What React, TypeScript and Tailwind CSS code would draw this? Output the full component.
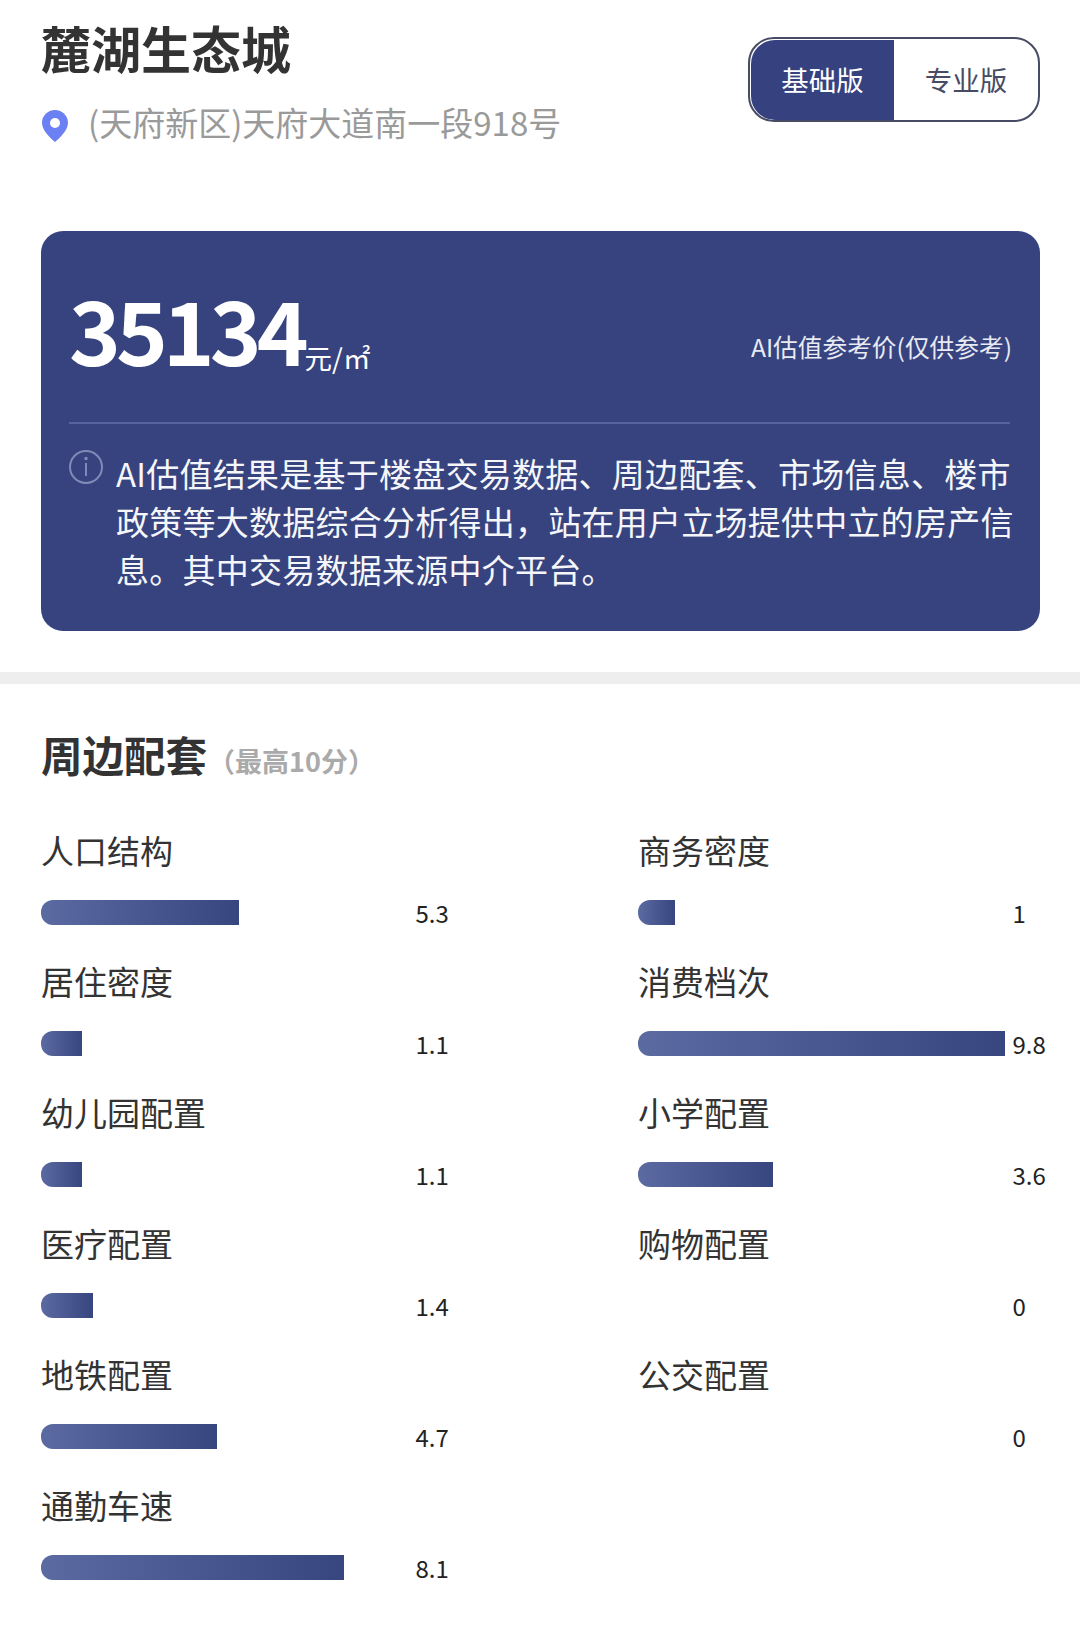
const FONT = "[font-family:'Noto_Sans_CJK_SC','Noto_Sans',sans-serif]";

const ROWS: { left: { label: string; value: number }; right?: { label: string; value: number } }[] = [
  { left: { label: "人口结构", value: 5.3 }, right: { label: "商务密度", value: 1 } },
  { left: { label: "居住密度", value: 1.1 }, right: { label: "消费档次", value: 9.8 } },
  { left: { label: "幼儿园配置", value: 1.1 }, right: { label: "小学配置", value: 3.6 } },
  { left: { label: "医疗配置", value: 1.4 }, right: { label: "购物配置", value: 0 } },
  { left: { label: "地铁配置", value: 4.7 }, right: { label: "公交配置", value: 0 } },
  { left: { label: "通勤车速", value: 8.1 } },
];

const BAR_UNIT = 37.4;

const Metric = ({ label, value }: { label: string; value: number }) => (
  <div className="h-[131px]">
    <div className="flex h-[40px] items-center text-[33px] leading-none text-[#333333]">{label}</div>
    <div className="mt-[29px] flex h-[27px] items-center">
      <div className="h-[25px] w-[374.500px]">
        {value > 0 && (
          <div
            className="h-full rounded-l-[12px] bg-gradient-to-r from-[#5b6aa1] to-[#38467f]"
            style={{ width: value * BAR_UNIT }}
          />
        )}
      </div>
      <span className="text-[24px] leading-none text-[#222222]">{value}</span>
    </div>
  </div>
);

export default function App() {
  return (
    <div className={`h-[1632px] w-[1080px] overflow-hidden bg-white ${FONT}`}>
      {/* Header */}
      <div className="flex h-[231px] justify-between pl-[41px] pr-[40px]">
        <div>
          <h1 className="mt-[17px] text-[50px] font-bold leading-[60px] text-[#333333]">麓湖生态城</h1>
          <div className="mt-[22px] flex items-center">
            <svg width="28" height="34" viewBox="0 0 28 34" className="mr-[19px] mt-[8px]">
              <path d="M14 1C6.800 1 1 6.700 1 13.800 1 22 10 29.500 14 33c4-3.500 13-11 13-19.200C27 6.700 21.200 1 14 1z" fill="#6b80f3" />
              <circle cx="14" cy="14" r="5" fill="#ffffff" />
            </svg>
            <span className="text-[33px] leading-[46px] text-[#9a9a9a]">(天府新区)天府大道南一段918号</span>
          </div>
        </div>
        <div className="mt-[37px] flex h-[85px] w-[292px] overflow-hidden rounded-[26px] border-2 border-[#474b63] pl-[1px] pt-[1px]">
          <div className="flex w-[143px] items-center justify-center rounded-l-[24px] bg-[#36427f] text-[27.5px] text-white">基础版</div>
          <div className="flex flex-1 items-center justify-center text-[27.5px] text-[#474b63]">专业版</div>
        </div>
      </div>

      {/* Price card */}
      <div className="mb-[41px] ml-[41px] mr-[40px] h-[400px] rounded-[22px] bg-[#37437e] px-[28px] text-white">
        <div className="flex h-[191px] items-end justify-between pb-[45px]">
          <div className="flex items-end">
            <span className="mb-[5px] text-[88px] font-bold leading-[88px] tracking-[-5px]">35134</span>
            <span className="mb-[2px] ml-[1px] text-[27.5px] leading-[36px]">元/㎡</span>
          </div>
          <span className="mb-[13px] text-[24.7px] leading-[36px] text-[#e8eaf4]">AI估值参考价(仅供参考)</span>
        </div>
        <div className="mr-[2px] h-[2px] bg-[#55649f]" />
        <div className="mt-[25px] flex">
          <svg width="34" height="34" viewBox="0 0 34 34" className="mr-[13px] mt-[1px] shrink-0" fill="none" stroke="#7f8ab8" strokeWidth="2">
            <circle cx="17" cy="17" r="16" />
            <path d="M17 13v13" />
            <circle cx="17" cy="8.500" r="0.800" fill="#7f8ab8" />
          </svg>
          <p className="-mr-[6px] text-[33px] leading-[48px] tracking-[0.25px] text-[#f5f6fa]">
            AI估值结果是基于楼盘交易数据、周边配套、市场信息、楼市政策等大数据综合分析得出，站在用户立场提供中立的房产信息。其中交易数据来源中介平台。
          </p>
        </div>
      </div>

      {/* Divider band */}
      <div className="h-[12px] bg-[#eeeeee]" />

      {/* Nearby facilities */}
      <div className="pl-[41px]">
        <div className="flex h-[146px] items-center pb-[4px]">
          <h2 className="text-[41.5px] font-bold leading-none text-[#333333]">周边配套</h2>
          <span className="ml-[1px] mt-[10px] text-[27px] font-bold leading-none text-[#aaaaaa]">（最高10分）</span>
        </div>
        <div className="grid grid-cols-[597px_1fr]">
          {ROWS.map((row) => (
            <div key={row.left.label} className="contents">
              <Metric {...row.left} />
              {row.right ? <Metric {...row.right} /> : <div />}
            </div>
          ))}
        </div>
      </div>
    </div>
  );
}
